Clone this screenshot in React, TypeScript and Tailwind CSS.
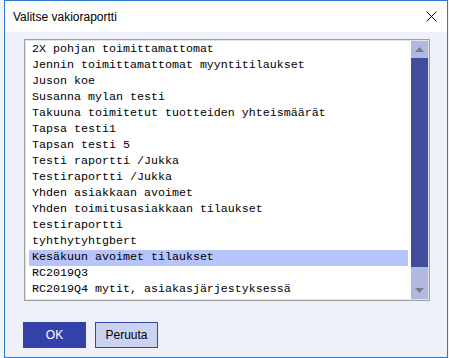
import React from 'react';

const items = [
  '2X pohjan toimittamattomat',
  'Jennin toimittamattomat myyntitilaukset',
  'Juson koe',
  'Susanna mylan testi',
  'Takuuna toimitetut tuotteiden yhteismäärät',
  'Tapsa testi1',
  'Tapsan testi 5',
  'Testi raportti /Jukka',
  'Testiraportti /Jukka',
  'Yhden asiakkaan avoimet',
  'Yhden toimitusasiakkaan tilaukset',
  'testiraportti',
  'tyhthytyhtgbert',
  'Kesäkuun avoimet tilaukset',
  'RC2019Q3',
  'RC2019Q4 mytit, asiakasjärjestyksessä',
];

const selected = 13;

export default function App() {
  return (
    <div className="flex h-[358px] w-[449px] bg-[#f3f3f3] pl-[4px] font-['Liberation_Sans',sans-serif]">
      <div className="flex h-[358px] w-[444px] flex-col border border-[#2a7ad4] bg-white">
        {/* title bar */}
        <div className="flex h-[31px] items-center justify-between pl-[8px] pr-[8px]">
          <span className="text-[12px] text-black">Valitse vakioraportti</span>
          <svg width="11" height="11" viewBox="0 0 11 11" className="mr-[2px]">
            <path d="M0.5 0.5 L10.5 10.5 M10.5 0.5 L0.5 10.5" stroke="#000" strokeWidth="1" />
          </svg>
        </div>

        <div className="flex flex-1 flex-col bg-[#eef1f9] pl-[19px] pt-[7px]">
          {/* list box */}
          <div className="h-[262px] w-[406px] border border-[#a0a0a0]">
            <div className="flex h-full border border-[#e3e3e3] bg-white">
              <div className="flex-1 pl-[3px] pr-[3px] pt-[1px] font-['Liberation_Mono',monospace] text-[11.67px] text-black">
                {items.map((it, i) => (
                  <div
                    key={it}
                    className={`flex h-[16px] items-center whitespace-pre pl-[3px] ${i === selected ? 'bg-[#b6c4fb]' : ''}`}
                  >
                    {it}
                  </div>
                ))}
              </div>
              {/* scrollbar */}
              <div className="flex w-[17px] flex-col bg-[#b1b9e3]">
                <div className="flex h-[17px] items-center justify-center">
                  <svg width="9" height="5" viewBox="0 0 9 5">
                    <path d="M4.5 0 L9 5 L0 5 Z" fill="#7a7a8a" />
                  </svg>
                </div>
                <div className="h-[209px] bg-[#424c9c]" />
                <div className="flex-1" />
                <div className="flex h-[17px] items-center justify-center">
                  <svg width="9" height="5" viewBox="0 0 9 5">
                    <path d="M0 0 L9 0 L4.5 5 Z" fill="#7a7a8a" />
                  </svg>
                </div>
              </div>
            </div>
          </div>

          {/* buttons */}
          <div className="-ml-[1px] mt-[21px] flex gap-[9px]">
            <button className="h-[26px] w-[63px] bg-[#3541aa] text-[12px] text-white">OK</button>
            <button className="h-[26px] w-[63px] border border-[#3a45a8] bg-[#ccd3f1] text-[12px] text-black">
              Peruuta
            </button>
          </div>
        </div>
      </div>
    </div>
  );
}
